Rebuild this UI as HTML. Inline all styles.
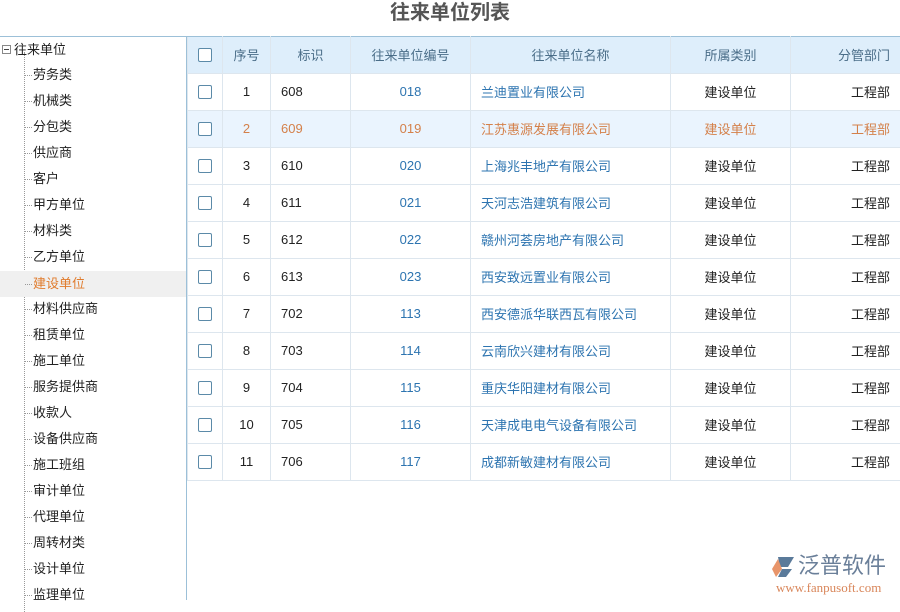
<!DOCTYPE html><html><head><meta charset="utf-8"><style>
*{margin:0;padding:0;box-sizing:border-box}
body{width:900px;height:600px;overflow:hidden;background:#fff;font-family:"Liberation Sans","Noto Sans CJK SC",sans-serif;font-size:13px;color:#222;position:relative}
.title{position:absolute;top:1px;left:0;width:900px;text-align:center;font-size:20px;font-weight:bold;color:#555;line-height:24px}
.tree{position:absolute;left:0;top:36px;width:187px;height:564px;border-top:1px solid #9cc0d8;border-right:1px solid #9cc0d8}
.tree .root{position:absolute;left:2px;top:4px;line-height:18px;font-size:13px}
.tree .root .box{display:inline-block;width:9px;height:9px;border:1px solid #888;vertical-align:middle;margin-right:3px;position:relative;top:-1px}
.tree .root .box:after{content:"";position:absolute;left:1px;top:3px;width:5px;height:1px;background:#444}
.vl{position:absolute;left:24px;top:15px;height:560px;border-left:1px dotted #999}
.it{position:absolute;left:0;width:186px;height:26px;line-height:26px;padding-left:33px;font-size:13px}
.it:before{content:"";position:absolute;left:25px;top:13px;width:7px;border-top:1px dotted #999}
.sel{background:#f0f0f0;color:#e07b2c}
table{position:absolute;left:187px;top:36px;border-collapse:collapse;table-layout:fixed;width:730px}
td,th{height:37px;border:1px solid #dde6ee;font-weight:normal;text-align:center;white-space:nowrap;overflow:hidden;padding-bottom:2px}
th{background:#deeefb;color:#4a6d88;border-top:1px solid #9cc0d8}
td{background:#fff}
tr.hl td{background:#eaf4fe;color:#d4804a}
.cb{display:inline-block;width:14px;height:14px;border:1px solid #5b8aa8;border-radius:2px;vertical-align:middle;background:#fff}
.l{text-align:left;padding-left:10px}
.b{color:#2d74b0}
tr.hl .b{color:#d4804a}
.r{text-align:right;padding-right:27px}
.logo{position:absolute;left:770px;top:553px}
</style></head><body>
<div class="title">往来单位列表</div>
<div class="tree">
<div class="root"><span class="box"></span>往来单位</div>
<div class="vl"></div>
<div class="it" style="top:25px">劳务类</div>
<div class="it" style="top:51px">机械类</div>
<div class="it" style="top:77px">分包类</div>
<div class="it" style="top:103px">供应商</div>
<div class="it" style="top:129px">客户</div>
<div class="it" style="top:155px">甲方单位</div>
<div class="it" style="top:181px">材料类</div>
<div class="it" style="top:207px">乙方单位</div>
<div class="it sel" style="top:234px">建设单位</div>
<div class="it" style="top:259px">材料供应商</div>
<div class="it" style="top:285px">租赁单位</div>
<div class="it" style="top:311px">施工单位</div>
<div class="it" style="top:337px">服务提供商</div>
<div class="it" style="top:363px">收款人</div>
<div class="it" style="top:389px">设备供应商</div>
<div class="it" style="top:415px">施工班组</div>
<div class="it" style="top:441px">审计单位</div>
<div class="it" style="top:467px">代理单位</div>
<div class="it" style="top:493px">周转材类</div>
<div class="it" style="top:519px">设计单位</div>
<div class="it" style="top:545px">监理单位</div>
</div>
<table>
<colgroup><col style="width:35px"><col style="width:48px"><col style="width:80px"><col style="width:120px"><col style="width:200px"><col style="width:120px"><col style="width:127px"></colgroup>
<tr><th><span class="cb"></span></th><th>序号</th><th>标识</th><th>往来单位编号</th><th>往来单位名称</th><th>所属类别</th><th class="r">分管部门</th></tr>
<tr><td><span class="cb"></span></td><td>1</td><td class="l">608</td><td class="b">018</td><td class="l b">兰迪置业有限公司</td><td>建设单位</td><td class="r">工程部</td></tr>
<tr class="hl"><td><span class="cb"></span></td><td>2</td><td class="l">609</td><td class="b">019</td><td class="l b">江苏惠源发展有限公司</td><td>建设单位</td><td class="r">工程部</td></tr>
<tr><td><span class="cb"></span></td><td>3</td><td class="l">610</td><td class="b">020</td><td class="l b">上海兆丰地产有限公司</td><td>建设单位</td><td class="r">工程部</td></tr>
<tr><td><span class="cb"></span></td><td>4</td><td class="l">611</td><td class="b">021</td><td class="l b">天河志浩建筑有限公司</td><td>建设单位</td><td class="r">工程部</td></tr>
<tr><td><span class="cb"></span></td><td>5</td><td class="l">612</td><td class="b">022</td><td class="l b">赣州河荟房地产有限公司</td><td>建设单位</td><td class="r">工程部</td></tr>
<tr><td><span class="cb"></span></td><td>6</td><td class="l">613</td><td class="b">023</td><td class="l b">西安致远置业有限公司</td><td>建设单位</td><td class="r">工程部</td></tr>
<tr><td><span class="cb"></span></td><td>7</td><td class="l">702</td><td class="b">113</td><td class="l b">西安德派华联西瓦有限公司</td><td>建设单位</td><td class="r">工程部</td></tr>
<tr><td><span class="cb"></span></td><td>8</td><td class="l">703</td><td class="b">114</td><td class="l b">云南欣兴建材有限公司</td><td>建设单位</td><td class="r">工程部</td></tr>
<tr><td><span class="cb"></span></td><td>9</td><td class="l">704</td><td class="b">115</td><td class="l b">重庆华阳建材有限公司</td><td>建设单位</td><td class="r">工程部</td></tr>
<tr><td><span class="cb"></span></td><td>10</td><td class="l">705</td><td class="b">116</td><td class="l b">天津成电电气设备有限公司</td><td>建设单位</td><td class="r">工程部</td></tr>
<tr><td><span class="cb"></span></td><td>11</td><td class="l">706</td><td class="b">117</td><td class="l b">成都新敏建材有限公司</td><td>建设单位</td><td class="r">工程部</td></tr>
</table>
<div class="logo">
<svg width="26" height="24" style="position:absolute;left:0;top:2px"><path d="M8 2 L24 2 L18 12 L10 12 Z" fill="#5a7a9a"/><path d="M2 14 L8 4 L12 14 L6 22 Z" fill="#e8956a"/><path d="M12 14 L22 14 L16 22 L8 22 Z" fill="#5a7a9a"/></svg>
<div style="position:absolute;left:28px;top:0;font-size:22px;color:#6a7f99;white-space:nowrap;line-height:26px">泛普软件</div>
<div style="position:absolute;left:6px;top:27px;font-family:'Liberation Serif',serif;font-size:13px;color:#d9865a;white-space:nowrap">www.fanpusoft.com</div>
</div>
</body></html>
